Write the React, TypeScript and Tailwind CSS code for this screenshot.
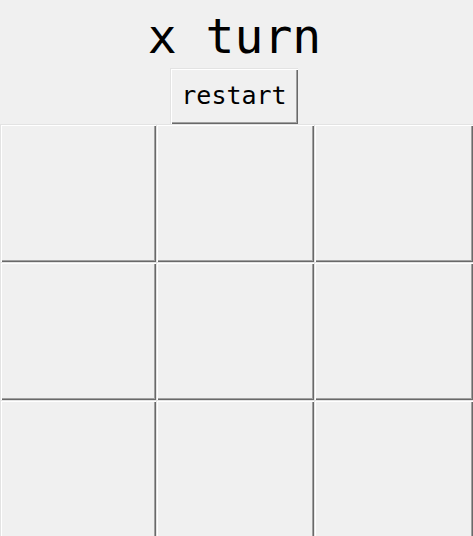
import React from 'react'

const raised =
  'shadow-[inset_1px_1px_0_#e3e3e3,inset_2px_2px_0_#ffffff,inset_-1px_-1px_0_#696969,inset_-2px_-2px_0_#a0a0a0]'

const App = () => {
  const cells = Array.from({ length: 9 }, (_, i) => i)

  return (
    <div
      className="h-[536px] w-[473px] overflow-hidden bg-[#f0f0f0] text-black"
      style={{ fontFamily: '"DejaVu Sans Mono", "Liberation Mono", monospace' }}
    >
      <div className="flex flex-col items-center">
        <div className="h-[68px] w-full pt-[8px] pr-[4px] text-center text-[48px] leading-[56px]">
          x turn
        </div>
        <button
          className={`mr-[5px] h-[56px] w-[128px] bg-[#f0f0f0] text-center text-[25px] leading-[56px] ${raised}`}
        >
          restart
        </button>
      </div>

      {/* board */}
      <div className="grid grid-cols-[156px_158px_159px] grid-rows-[138px_138px_138px]">
        {cells.map((c) => (
          <button key={c} className={`bg-[#f0f0f0] ${raised}`}></button>
        ))}
      </div>
    </div>
  )
}

export default App
